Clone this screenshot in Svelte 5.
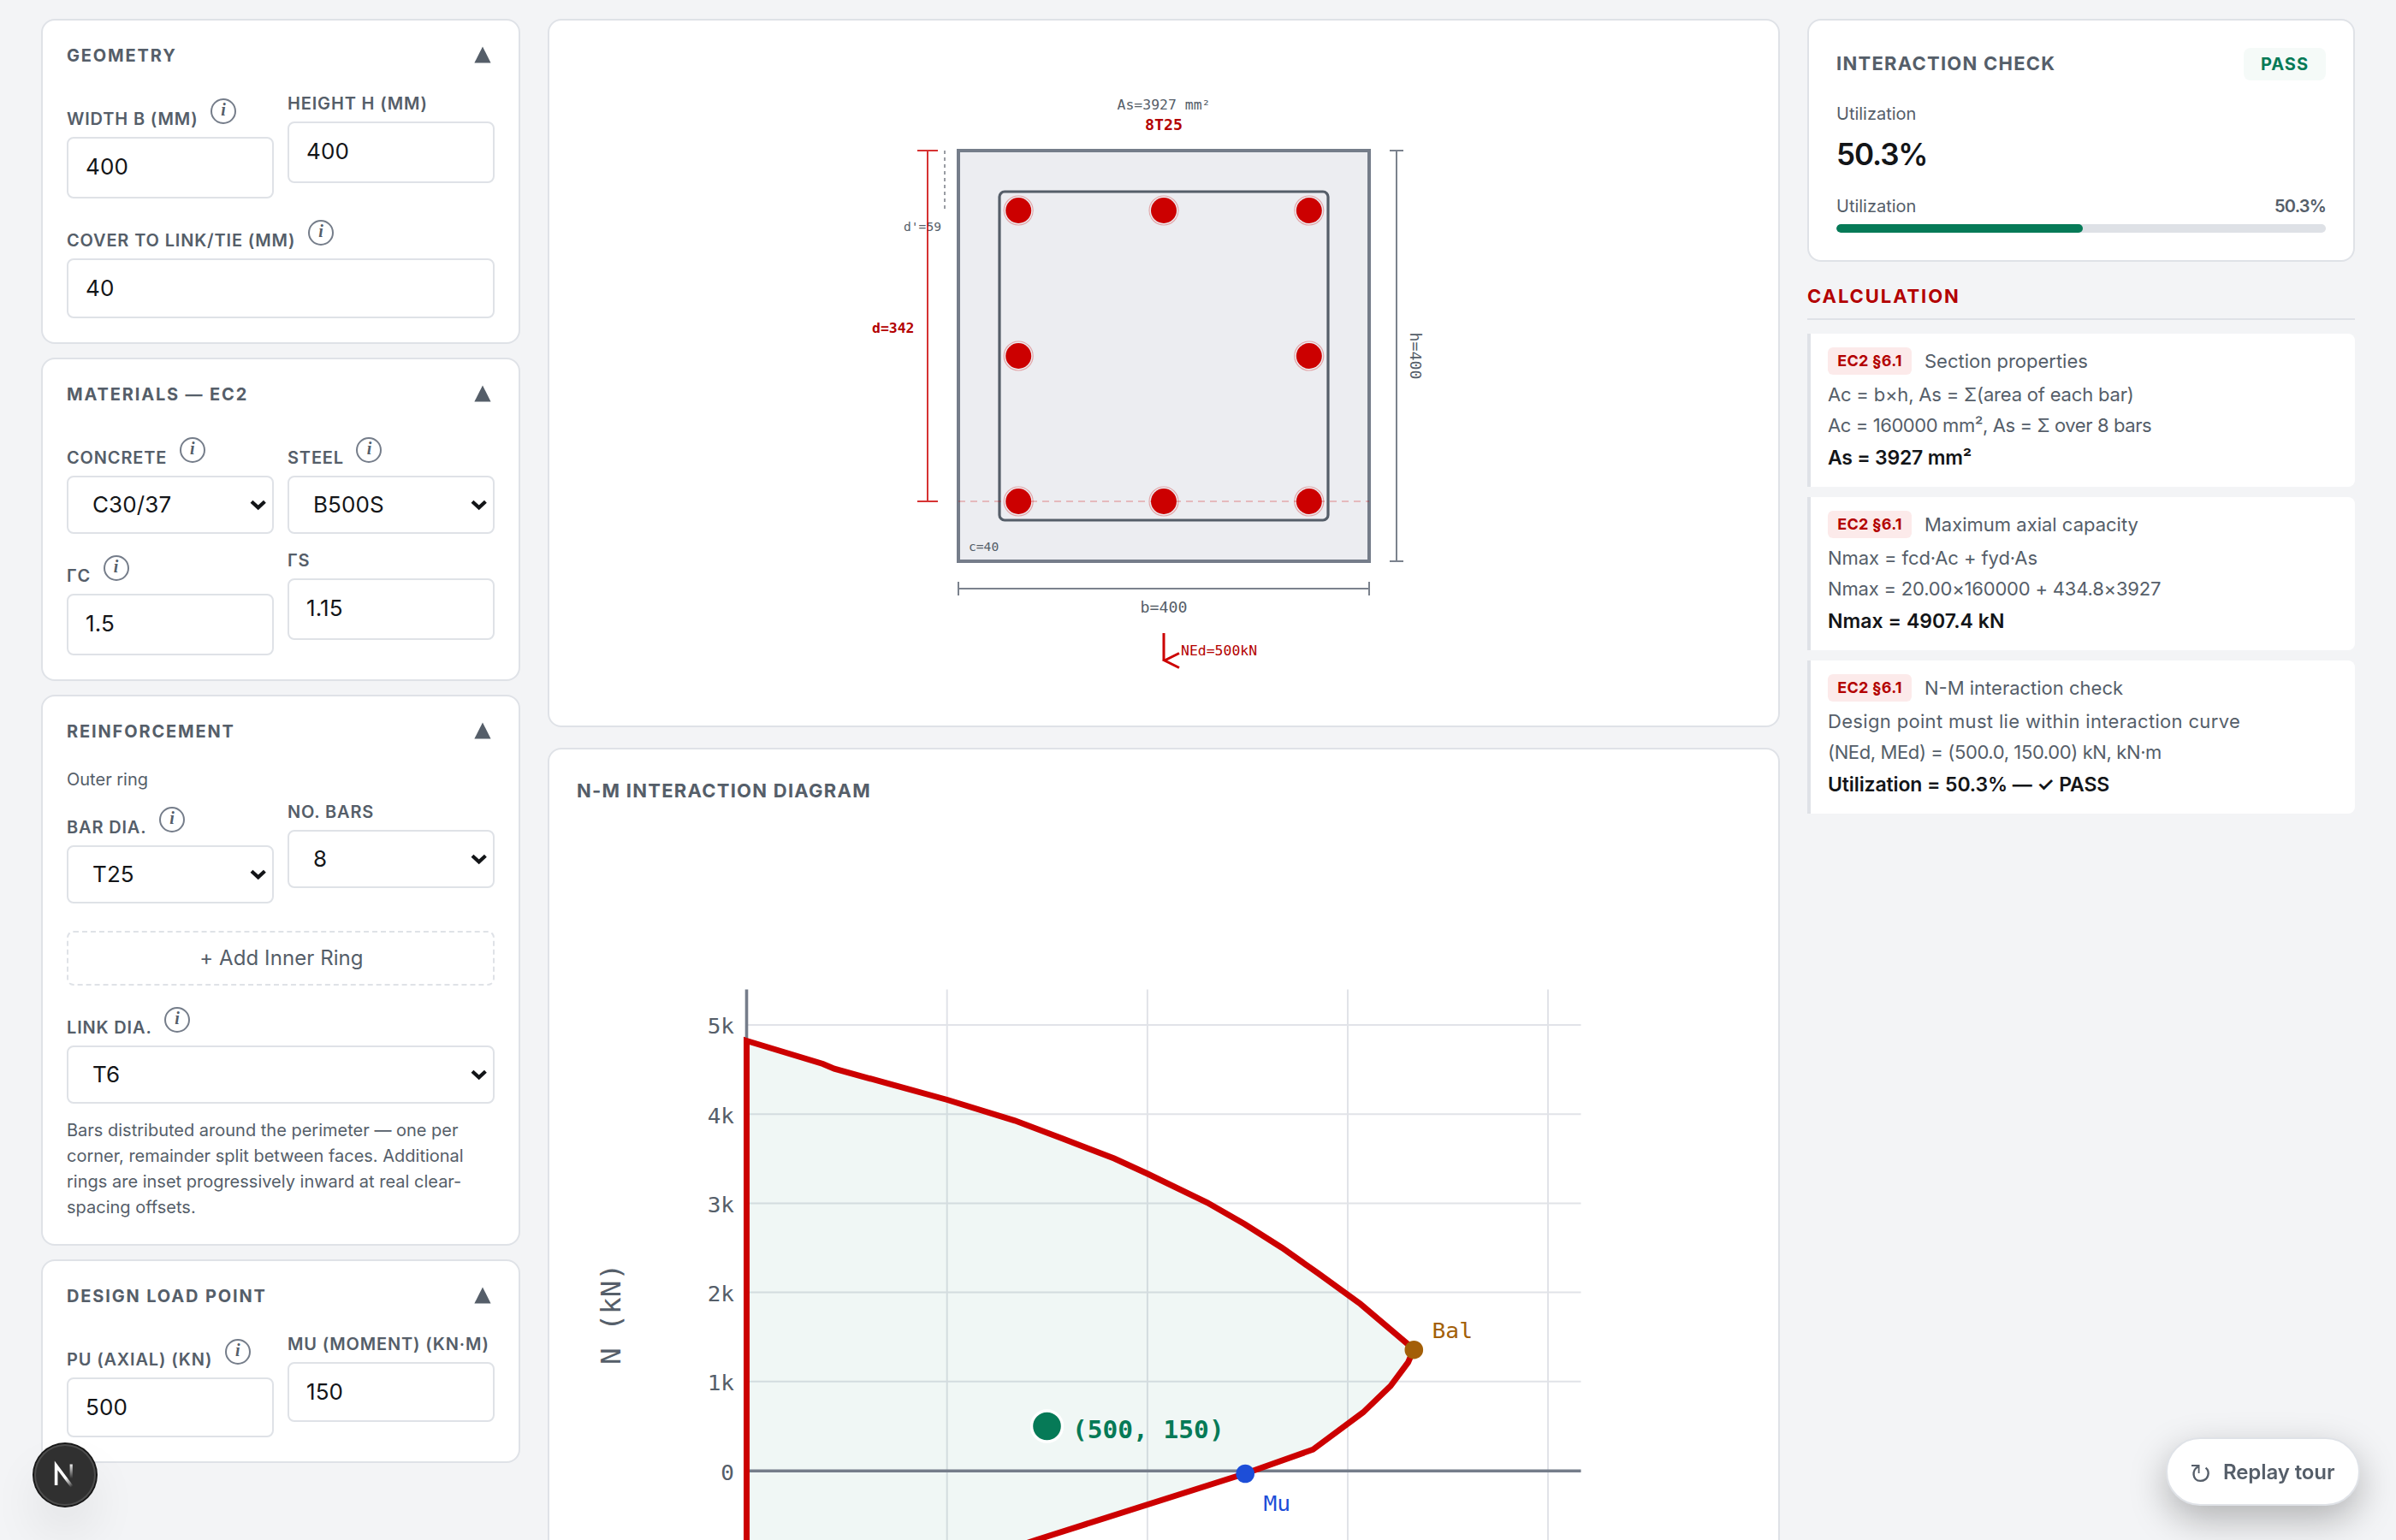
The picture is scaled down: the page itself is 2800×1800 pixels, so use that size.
<script lang="ts">
  type Field = { label: string; value: string; info?: boolean; select?: boolean; wide?: boolean };

  const geometry: Field[] = [
    { label: 'Width b (mm)', value: '400', info: true },
    { label: 'Height h (mm)', value: '400' },
    { label: 'Cover to link/tie (mm)', value: '40', info: true, wide: true },
  ];
  const materials: Field[] = [
    { label: 'Concrete', value: 'C30/37', info: true, select: true },
    { label: 'Steel', value: 'B500S', info: true, select: true },
    { label: 'γc', value: '1.5', info: true },
    { label: 'γs', value: '1.15' },
  ];
  const outerRing: Field[] = [
    { label: 'Bar dia.', value: 'T25', info: true, select: true },
    { label: 'No. bars', value: '8', select: true },
  ];
  const link: Field[] = [{ label: 'Link dia.', value: 'T6', info: true, select: true, wide: true }];
  const loads: Field[] = [
    { label: 'Pu (axial) (kN)', value: '500', info: true },
    { label: 'Mu (moment) (kN·m)', value: '150' },
  ];

  const utilization = 50.3;

  // spacing: letter-spacing in px for each line
  const steps = [
    {
      title: 'Section properties',
      lines: [
        { text: 'Ac = b×h, As = Σ(area of each bar)', spacing: -0.19 },
        { text: 'Ac = 160000 mm², As = Σ over 8 bars', spacing: -0.41 },
      ],
      result: { text: 'As = 3927 mm²', spacing: -0.23 },
    },
    {
      title: 'Maximum axial capacity',
      lines: [
        { text: 'Nmax = fcd·Ac + fyd·As', spacing: -0.09 },
        { text: 'Nmax = 20.00×160000 + 434.8×3927', spacing: -0.19 },
      ],
      result: { text: 'Nmax = 4907.4 kN', spacing: 0.05 },
    },
    {
      title: 'N-M interaction check',
      lines: [
        { text: 'Design point must lie within interaction curve', spacing: 0.33 },
        { text: '(NEd, MEd) = (500.0, 150.00) kN, kN·m', spacing: -0.39 },
      ],
      result: { text: 'Utilization = 50.3% — ✓ PASS', spacing: -0.11 },
    },
  ];

  const bars = [
    [1190.2, 246], [1360, 246], [1529.8, 246],
    [1190.2, 416], [1529.8, 416],
    [1190.2, 586], [1360, 586], [1529.8, 586],
  ];

  const gridX = [1106.7, 1340.9, 1575, 1809];
  const gridY = [
    { y: 1198, label: '5k' },
    { y: 1302.2, label: '4k' },
    { y: 1406.4, label: '3k' },
    { y: 1510.6, label: '2k' },
    { y: 1614.8, label: '1k' },
    { y: 1719.2, label: '0' },
  ];
  const curve =
    '872.5,1216.5 961.6,1243.5 975,1249.2 1107,1285.5 1186,1309.8 1242.2,1331.1 1302,1354 1341.2,1372 ' +
    '1410.6,1405.5 1454.5,1430.8 1498.2,1458.5 1540.6,1488.4 1589.7,1524 1652.2,1577 1645.5,1592.4 1625,1620 ' +
    '1592.9,1650.9 1534.4,1694.2 1455.4,1722.3 1210.6,1800 1040,1858 872.5,1960';
</script>

{#snippet fields(list: Field[], short = false)}
  <div class="fields" class:short>
    {#each list as f}
      <div class="field" class:wide={f.wide}>
        <div class="label" class:with-info={f.info}>
          <span>{f.label}</span>
          {#if f.info}<span class="info">i</span>{/if}
        </div>
        {#if f.select}
          <div class="control select">
            <span>{f.value}</span>
            <svg width="20" height="14" viewBox="0 0 20 14"><path d="M2 3.2 L9.7 10.4 L17.4 3.2" /></svg>
          </div>
        {:else}
          <div class="control">{f.value}</div>
        {/if}
      </div>
    {/each}
  </div>
{/snippet}

{#snippet head(title: string)}
  <header class="head">
    <h2>{title}</h2>
    <svg width="20" height="20" viewBox="0 0 20 20"><path d="M10 0.5 L19.6 19.5 H0.4 Z" /></svg>
  </header>
{/snippet}

<!-- Monospace label; the length follows the 0.55em advance of the drawing font -->
{#snippet mono(x: number, y: number, text: string, size: number, cls = '', anchor = 'start', transform = '')}
  <text
    {x}
    {y}
    class={cls}
    text-anchor={anchor}
    font-size={size * 0.89}
    textLength={text.length * size * 0.55}
    lengthAdjust="spacingAndGlyphs"
    transform={transform || undefined}>{text}</text>
{/snippet}

<div class="page">
  <!-- Inputs -->
  <aside class="inputs">
    <section class="card panel">
      {@render head('Geometry')}
      {@render fields(geometry)}
    </section>
    <section class="card panel">
      {@render head('Materials — EC2')}
      {@render fields(materials)}
    </section>
    <section class="card panel">
      {@render head('Reinforcement')}
      <p class="ring">Outer ring</p>
      {@render fields(outerRing)}
      <button class="add">+ Add Inner Ring</button>
      {@render fields(link)}
      <p class="help">
        Bars distributed around the perimeter — one per corner, remainder split between faces.
        Additional rings are inset progressively inward at real clear-spacing offsets.
      </p>
    </section>
    <section class="card panel">
      {@render head('Design load point')}
      {@render fields(loads, true)}
    </section>
  </aside>

  <!-- Drawings -->
  <main class="drawings">
    <section class="card section-view">
      <svg viewBox="642 24 1436 824" width="1436" height="824">
        <rect x="1120" y="176" width="480" height="480" fill="#ecedf1" stroke="#757d8a" stroke-width="4" />
        <rect x="1168" y="224" width="384" height="384" rx="6" fill="none" stroke="#555e69" stroke-width="3.2" />
        <path d="M1120 586 H1600" stroke="#cc0000" stroke-opacity=".22" stroke-width="2" stroke-dasharray="8 6" />
        {#each bars as [x, y]}
          <circle cx={x} cy={y} r="17" fill="none" stroke="#cc0000" stroke-opacity=".3" stroke-width="1.2" />
          <circle cx={x} cy={y} r="15" fill="#cc0000" />
        {/each}

        {@render mono(1360, 128, 'As=3927 mm²', 18, '', 'middle')}
        {@render mono(1360, 152, '8T25', 20, 'red bold', 'middle')}
        {@render mono(1100, 270, "d'=59", 16, '', 'end')}
        {@render mono(1068.5, 389, 'd=342', 18, 'red bold', 'end')}
        {@render mono(1132, 644, 'c=40', 16)}

        <path d="M1084 176 V586 M1072 176 H1096 M1072 586 H1096" stroke="#cc0000" stroke-opacity=".8" stroke-width="2" />
        <path d="M1104 176 V246" stroke="#999ca3" stroke-width="2" stroke-dasharray="4 4" />
        <path d="M1632 176 V656 M1624 176 H1640 M1624 656 H1640" stroke="#7b828d" stroke-width="2" />
        <path d="M1120 688 H1600 M1120 680 V696 M1600 680 V696" stroke="#7b828d" stroke-width="2" />
        {@render mono(0, 0, 'h=400', 20, '', 'middle', 'translate(1648 416) rotate(90)')}
        {@render mono(1360, 716, 'b=400', 20, '', 'middle')}

        <path d="M1360 740 V772 M1378 763.5 L1361 772 L1378 780.5" fill="none" stroke="#cc0000" stroke-width="3" />
        {@render mono(1380, 766, 'NEd=500kN', 18, 'red')}
      </svg>
    </section>

    <section class="card diagram">
      <h3>N-M interaction diagram</h3>
      <svg viewBox="676 950 1368 1020" width="1368" height="1020">
        {#each gridX as x}
          <path d="M{x} 1156.5 V1960" stroke="#e1e3e8" stroke-width="2" />
        {/each}
        {#each gridY as g}
          <path d="M872.5 {g.y} H1847.5" stroke="#e1e3e8" stroke-width="2" />
          {@render mono(858, g.y + 10.3, g.label, 28.5, '', 'end')}
        {/each}
        <polygon points={curve} fill="#067a57" fill-opacity=".06" />
        <path d="M872.5 1156.5 V1960 M872.5 1719.2 H1847.5" stroke="#757d8a" stroke-width="3.6" />
        <polygon points={curve} fill="none" stroke="#cc0000" stroke-width="7" />

        <circle cx="1652.3" cy="1577.7" r="10.8" fill="#a35f08" />
        {@render mono(1673.5, 1564.3, 'Bal', 28.8, 'brown')}
        <circle cx="1455.2" cy="1722.5" r="10.8" fill="#1d4ed8" />
        {@render mono(1476.5, 1766, 'Mu', 28.8, 'blue')}
        <circle cx="1223.5" cy="1667" r="18" fill="#067a57" stroke="#fff" stroke-width="3.4" />
        {@render mono(1253, 1680.7, '(500, 150)', 32.3, 'green bold')}
        {@render mono(0, 0, 'N (kN)', 35.8, '', 'middle', 'translate(725 1536) rotate(-90)')}
      </svg>
    </section>
  </main>

  <!-- Results -->
  <aside class="results">
    <section class="card check">
      <div class="row">
        <h3>Interaction check</h3>
        <span class="pass">PASS</span>
      </div>
      <p class="caption">Utilization</p>
      <p class="big">{utilization}%</p>
      <div class="row meter-row">
        <span class="caption">Utilization</span>
        <span class="pct">{utilization}%</span>
      </div>
      <div class="meter"><div class="meter-fill" style="width: {utilization}%"></div></div>
    </section>

    <h3 class="calc-title">Calculation</h3>
    <div class="steps">
      {#each steps as s}
        <article class="step">
          <div class="step-head"><span class="clause">EC2 §6.1</span><span>{s.title}</span></div>
          {#each s.lines as l}
            <p style="letter-spacing: {l.spacing}px">{l.text}</p>
          {/each}
          <p class="result" style="letter-spacing: {s.result.spacing}px">{s.result.text}</p>
        </article>
      {/each}
    </div>
  </aside>
</div>

<div class="dev-badge">
  <svg width="40" height="40" viewBox="0 0 40 40" fill="none">
    <defs>
      <linearGradient id="diag" gradientUnits="userSpaceOnUse" x1="21" y1="23" x2="29" y2="33">
        <stop stop-color="#fff" />
        <stop offset=".604" stop-color="#fff" stop-opacity="0.45" />
        <stop offset="1" stop-color="#fff" stop-opacity="0" />
      </linearGradient>
      <linearGradient id="stem" gradientUnits="userSpaceOnUse" x1="27" y1="6" x2="27" y2="24">
        <stop stop-color="#fff" />
        <stop offset="1" stop-color="#fff" stop-opacity="0" />
      </linearGradient>
    </defs>
    <path d="M9.6 32 V9 L29.5 35.5" stroke="url(#diag)" stroke-width="3.6" />
    <path d="M27.2 7.5 V27" stroke="url(#stem)" stroke-width="3.2" />
  </svg>
</div>

<button class="replay">
  <svg width="24" height="22" viewBox="0 0 24 22" fill="none" stroke="#555e69">
    <path d="M1 2 H9.6 V11" stroke-width="1.8" />
    <path d="M8.8 3.4 C1.4 6.5 1.4 19.7 11.5 19.9 C21 19.9 23.2 9 17.6 4.6" stroke-width="2.4" />
  </svg>
  Replay tour
</button>

<style>
  :global(body) { background: #f3f4f6; overflow: hidden; }

  .page {
    display: grid; grid-template-columns: 560px 1440px 640px; gap: 32px; align-items: start;
    box-sizing: border-box; height: 1800px; padding: 22px 48px 0; overflow: hidden;
    font-family: Inter, "Liberation Sans", sans-serif; color: #555e69;
  }
  .page *, .replay, .dev-badge { box-sizing: border-box; }
  h2, h3, p { margin: 0; }

  .card { background: #fff; border: 2px solid #dfe2e7; border-radius: 16px; }
  svg { display: block; }

  .inputs { display: flex; flex-direction: column; gap: 16px; }
  .panel { padding: 28px; }
  .head { display: flex; justify-content: space-between; align-items: center; height: 26px; margin-bottom: 28px; }
  .head h2 { font-size: 20px; line-height: 26px; font-weight: 700; letter-spacing: 1.85px; text-transform: uppercase; }
  .head svg { margin: -3px 4px 0 0; fill: #555e69; }

  .fields { display: grid; grid-template-columns: 1fr 1fr; gap: 16px; align-items: start; }
  .wide { grid-column: 1 / -1; }
  .label { display: flex; align-items: flex-end; height: 30px; margin-bottom: 6px; font-size: 20px; line-height: 30px; font-weight: 600; letter-spacing: .84px; text-transform: uppercase; white-space: nowrap; }
  .with-info { height: 48px; }
  .info {
    width: 30px; height: 30px; margin: 0 0 9px 14.5px; border: 2px solid #757d8a; border-radius: 50%;
    font: italic 700 20px/23px "Liberation Serif", serif; letter-spacing: 0; text-transform: none; text-align: center;
  }
  .control {
    height: 72px; padding: 0 20px; border: 2px solid #dfe2e7; border-radius: 8px;
    font-size: 26px; line-height: 65px; letter-spacing: .1px; color: #131518;
  }
  .wide .control, .short .control { height: 70px; }
  .wide .select, .select { display: flex; align-items: center; justify-content: space-between; height: 68px; padding: 0 6px 0 28px; line-height: 64px; }
  .select span { margin-top: -1px; }
  .select svg { fill: none; stroke: #131518; stroke-width: 4.2; }

  .ring { height: 31px; margin-bottom: 7px; font-size: 20px; line-height: 31px; }
  .add {
    display: block; width: 100%; height: 64px; margin: 32px 0 16px; padding: 0 0 2px 2px; background: none;
    border: 2px dashed #dfe2e7; border-radius: 8px; font: 24px Inter, sans-serif; letter-spacing: .08px; color: inherit;
  }
  .help { margin-top: 16px; font-size: 20px; line-height: 30px; }

  .drawings { display: flex; flex-direction: column; gap: 24px; }
  .section-view { height: 828px; overflow: hidden; }
  .diagram { padding: 32px 34px 34px 32px; }
  .diagram svg { margin-left: 2px; margin-top: 10px; }
  h3 { font-size: 22px; line-height: 32px; font-weight: 700; letter-spacing: 1.25px; text-transform: uppercase; }
  text { fill: #555e69; font-family: "DejaVu Sans Mono", monospace; }
  .red { fill: #b30000; }
  .green { fill: #067a57; }
  .blue { fill: #1d4ed8; }
  .brown { fill: #a35f08; }
  .bold { font-weight: 700; }

  .check { height: 284px; padding: 32px; }
  .row { display: flex; justify-content: space-between; align-items: center; }
  .row h3 { margin-top: -2px; }
  .pass { width: 96px; height: 38px; border-radius: 8px; background: #f5faf8; color: #067a57; font-size: 20px; line-height: 38px; font-weight: 700; letter-spacing: 1px; text-align: center; }
  .caption { font-size: 20px; line-height: 30px; }
  .row + .caption { margin-top: 24px; }
  .big { margin-top: 10px; font-size: 35px; line-height: 44px; font-weight: 600; letter-spacing: -1.1px; color: #131518; }
  .meter-row { height: 30px; margin-top: 24px; }
  .pct { font-size: 20px; font-weight: 600; letter-spacing: -.8px; }
  .meter { height: 10px; margin-top: 6px; border-radius: 5px; background: #dee1e6; overflow: hidden; }
  .meter-fill { height: 100%; border-radius: 5px; background: #067a57; }

  .calc-title { height: 52px; margin-top: 16px; padding-top: 8px; border-bottom: 2px solid #dfe2e7; letter-spacing: 1.9px; color: #b30000; }
  .steps { display: flex; flex-direction: column; gap: 12px; margin-top: 16px; }
  .step { height: 179px; padding: 16px 20px; background: #fff; border-left: 4px solid #dfe2e7; border-radius: 0 8px 8px 0; }
  .step p { font-size: 22px; line-height: 36px; white-space: nowrap; }
  .step-head { display: flex; align-items: center; gap: 15px; height: 32px; margin-bottom: 5px; font-size: 22px; }
  .clause { width: 98px; height: 32px; border-radius: 6px; background: #fceaea; color: #b30000; font-size: 18px; line-height: 32px; font-weight: 700; letter-spacing: .2px; text-align: center; }
  .step .result { margin-top: 2px; font-size: 23px; font-weight: 600; color: #131518; }

  .dev-badge {
    position: fixed; left: 40px; bottom: 40px; display: flex; align-items: center; justify-content: center;
    width: 72px; height: 72px; border-radius: 50%; background: #303030;
    box-shadow: 0 0 0 2px #171717, inset 0 0 0 2px #4c4c4c, 0 32px 64px -16px rgba(0, 0, 0, .24);
  }
  .replay {
    position: fixed; right: 42px; bottom: 40px; display: flex; align-items: center; gap: 14px;
    width: 227px; height: 80px; padding: 0 0 0 27px; background: #fff; border: 2px solid #dfe2e7; border-radius: 40px;
    box-shadow: 0 16px 44px rgba(0, 0, 0, .27);
    font: 600 24px Inter, sans-serif; letter-spacing: -.1px; color: #555e69;
  }
  .replay svg { margin-top: 4px; }
</style>
